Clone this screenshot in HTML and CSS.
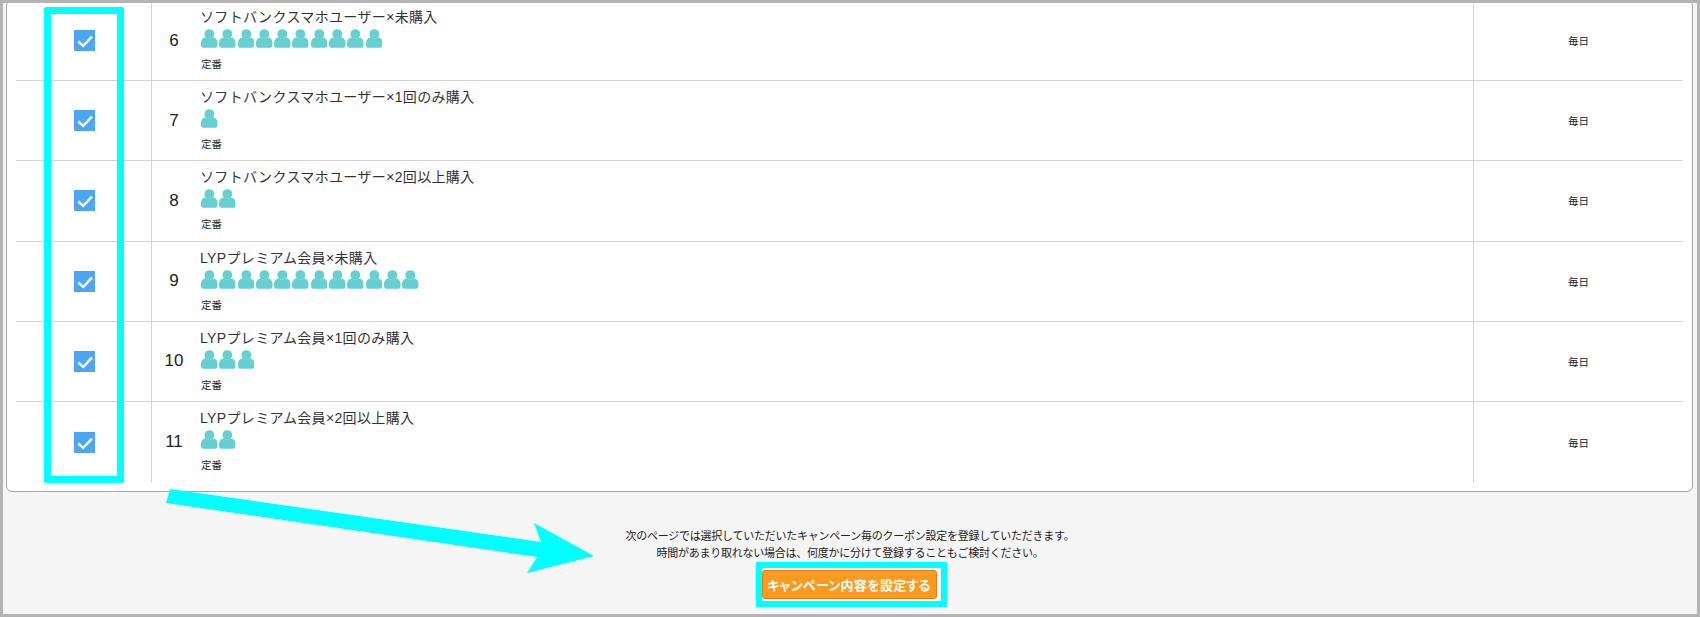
FILE: index.html
```html
<!DOCTYPE html>
<html lang="ja">
<head>
    <meta charset="UTF-8">
    <title>キャンペーン選択</title>
    <link rel="stylesheet" href="styles.css">
</head>
<body>
    <svg class="icon-defs" width="0" height="0">
        <symbol id="person" viewBox="0 0 17 19">
            <circle cx="8.5" cy="5" r="5"></circle>
            <path d="M0 14.500C0 10.500 2.500 8.500 5 8.200C6.500 10.200 10.500 10.200 12 8.200C14.500 8.500 17 10.500 17 14.500V16C17 18 15.500 19 14 19H3C1.500 19 0 18 0 16Z"></path>
        </symbol>
        <symbol id="check" viewBox="0 0 21 21">
            <path d="M4.300 11.500L9.200 15.800L18 6.700"></path>
        </symbol>
    </svg>

    <div class="frame">
        <div class="card">
            <div class="row">
                <div class="col-check"><svg class="checkbox"><use href="#check"></use></svg></div>
                <div class="col-no">6</div>
                <div class="col-main">
                    <div class="title">ソフトバンクスマホユーザー×未購入</div>
                    <div class="people" data-count="10"></div>
                    <div class="tag">定番</div>
                </div>
                <div class="col-freq">毎日</div>
            </div>
            <div class="row">
                <div class="col-check"><svg class="checkbox"><use href="#check"></use></svg></div>
                <div class="col-no">7</div>
                <div class="col-main">
                    <div class="title">ソフトバンクスマホユーザー×1回のみ購入</div>
                    <div class="people" data-count="1"></div>
                    <div class="tag">定番</div>
                </div>
                <div class="col-freq">毎日</div>
            </div>
            <div class="row">
                <div class="col-check"><svg class="checkbox"><use href="#check"></use></svg></div>
                <div class="col-no">8</div>
                <div class="col-main">
                    <div class="title">ソフトバンクスマホユーザー×2回以上購入</div>
                    <div class="people" data-count="2"></div>
                    <div class="tag">定番</div>
                </div>
                <div class="col-freq">毎日</div>
            </div>
            <div class="row">
                <div class="col-check"><svg class="checkbox"><use href="#check"></use></svg></div>
                <div class="col-no">9</div>
                <div class="col-main">
                    <div class="title">LYPプレミアム会員×未購入</div>
                    <div class="people" data-count="12"></div>
                    <div class="tag">定番</div>
                </div>
                <div class="col-freq">毎日</div>
            </div>
            <div class="row">
                <div class="col-check"><svg class="checkbox"><use href="#check"></use></svg></div>
                <div class="col-no">10</div>
                <div class="col-main">
                    <div class="title">LYPプレミアム会員×1回のみ購入</div>
                    <div class="people" data-count="3"></div>
                    <div class="tag">定番</div>
                </div>
                <div class="col-freq">毎日</div>
            </div>
            <div class="row">
                <div class="col-check"><svg class="checkbox"><use href="#check"></use></svg></div>
                <div class="col-no">11</div>
                <div class="col-main">
                    <div class="title">LYPプレミアム会員×2回以上購入</div>
                    <div class="people" data-count="2"></div>
                    <div class="tag">定番</div>
                </div>
                <div class="col-freq">毎日</div>
            </div>
        </div>

        <div class="footer">
            <p>次のページでは選択していただいたキャンペーン毎のクーポン設定を登録していただきます。</p>
            <p>時間があまり取れない場合は、何度かに分けて登録することもご検討ください。</p>
            <div class="btn-mark"><button class="btn">キャンペーン内容を設定する</button></div>
        </div>

        <!-- 注釈 -->
        <div class="mark-checks"></div>
        <svg class="mark-arrow" width="440" height="95" viewBox="0 0 440 95">
            <polygon points="7,0 378,53 371,34 431,67 364,84 374,68 3,14"></polygon>
        </svg>
    </div>

    <script>
        // 人数アイコンを並べる
        document.querySelectorAll('.people').forEach(el => {
            const count = Number(el.dataset.count);
            for (let i = 0; i < count; i++) {
                el.innerHTML += '<svg class="person"><use href="#person"></use></svg>';
            }
        });
    </script>
</body>
</html>
```

FILE: styles.css
```css
html, body {
    margin: 0;
    height: 617px;
    overflow: hidden;
}

body {
    font-family: "Liberation Sans", "Noto Sans CJK JP", sans-serif;
    color: #222;
}

.icon-defs {
    position: absolute;
}

.frame {
    position: relative;
    box-sizing: border-box;
    height: 617px;
    border: 3px solid #b3b3b3;
    background-color: #f5f5f5;
    overflow: hidden;
}

.card {
    margin: -3px 4px 0 3px;
    padding: 0 9px 9px;
    background-color: white;
    border: 1px solid #a6a6a6;
    border-radius: 6px;
}

.row {
    display: flex;
    box-sizing: border-box;
    height: 80.2px;
    border-bottom: 1px solid #d4d4d4;
}

.row:last-child {
    border-bottom: none;
}

.col-check {
    width: 133px;
    padding-left: 2px;
    border-right: 1px solid #d4d4d4;
    display: flex;
    align-items: center;
    justify-content: center;
}

.checkbox {
    display: block;
    width: 21px;
    height: 21px;
    background-color: #4da6f5;
    fill: none;
    stroke: white;
    stroke-width: 2.400;
}

.col-no {
    width: 44px;
    display: flex;
    align-items: center;
    justify-content: center;
    font-size: 17px;
}

.col-main {
    flex: 1;
    padding: 7px 0 0 5px;
}

.title {
    height: 21px;
    margin-left: -1px;
    font-size: 14px;
    line-height: 18px;
    letter-spacing: 0.350px;
    color: #333;
    white-space: nowrap;
}

.people {
    display: flex;
    gap: 1.600px;
    height: 19px;
}

.person {
    width: 16.700px;
    height: 19px;
    fill: #66cfd2;
}

.tag {
    margin-top: 9px;
    font-size: 10.500px;
    line-height: 14px;
}

.col-freq {
    width: 210px;
    border-left: 1px solid #d4d4d4;
    box-sizing: border-box;
    display: flex;
    align-items: center;
    justify-content: center;
    font-size: 10.500px;
}

.footer {
    display: flex;
    flex-direction: column;
    align-items: center;
    padding-top: 36px;
    font-size: 11px;
    line-height: 17px;
    letter-spacing: -0.250px;
}

.footer p {
    margin: 0;
}

.btn-mark {
    margin-left: 2px;
    padding: 0 4px 2px 0;
    border: 6px solid cyan;
    border-radius: 1px;
    background-color: #f5f5f5;
}

.btn {
    display: block;
    width: 175px;
    height: 29px;
    padding: 0;
    margin-top: 2px;
    background-color: #fb9a1e;
    color: white;
    border: 1px solid #d9820f;
    border-radius: 3px;
    font-family: inherit;
    font-size: 13px;
    font-weight: bold;
    letter-spacing: 0.300px;
    font-feature-settings: "palt";
}

.mark-checks {
    position: absolute;
    left: 41px;
    top: 4px;
    width: 66px;
    height: 462px;
    border: 7px solid cyan;
    border-radius: 2px;
}

.mark-arrow {
    position: absolute;
    left: 160px;
    top: 486px;
    fill: cyan;
}
```
